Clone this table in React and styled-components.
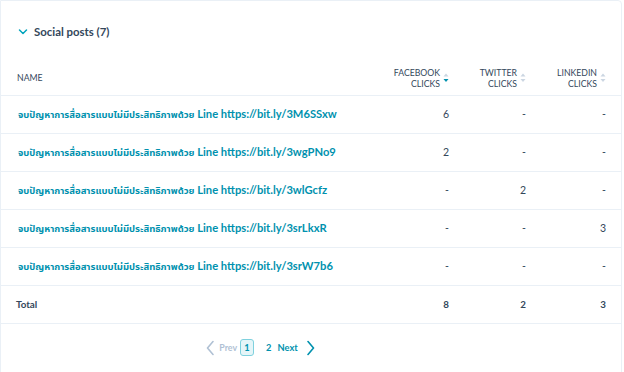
import React from "react";
import styled, { createGlobalStyle } from "styled-components";

const Global = createGlobalStyle`
  html, body { margin: 0; padding: 0; background: #fff; }
  body { font-family: Lato, "Noto Sans", "Noto Sans Thai", sans-serif; color: #33475b; }
`;

const Card = styled.div`
  width: 622px;
  height: 390px;
  border: 1px solid #eaf0f6;
  border-radius: 0 4px 0 0;
  background: #fff;
  box-sizing: border-box;
`;

const Head = styled.div`
  display: flex;
  align-items: center;
  gap: 6px;
  height: 59px;
  padding-left: 17px;
  padding-top: 2px;
  box-sizing: border-box;
`;

const Title = styled.h3`
  margin: 0;
  font-size: 11.4px;
  font-weight: 700;
  color: #33475b;
`;

const Table = styled.table`
  width: 100%;
  border-collapse: collapse;
  table-layout: fixed;
`;

const Th = styled.th`
  height: 35px;
  padding: 0 15px 6px ${(p) => (p.$first ? "16px" : "0")};
  text-align: ${(p) => (p.$first ? "left" : "right")};
  vertical-align: bottom;
  font-size: 8.7px;
  font-weight: 400;
  line-height: 11px;
  color: #33475b;
  text-transform: uppercase;
  border-bottom: 1px solid #eaf0f6;
  width: ${(p) => p.$w || "auto"};
  box-sizing: border-box;
`;

const HeadInner = styled.span`
  display: inline-flex;
  align-items: center;
  gap: 3px;
  padding-bottom: ${(p) => (p.$single ? "6px" : "0")};
`;

const Td = styled.td`
  height: 38px;
  padding: 0 15px 0 ${(p) => (p.$first ? "17px" : "0")};
  text-align: ${(p) => (p.$first ? "left" : "right")};
  font-size: 10.5px;
  font-weight: 400;
  color: #33475b;
  border-bottom: 1px solid #eaf0f6;
  white-space: nowrap;
  box-sizing: border-box;
`;

const TotalCell = styled(Td)`
  font-size: 9.8px;
  font-weight: 700;
  padding-left: ${(p) => (p.$first ? "15px" : "0")};
`;

const Link = styled.a`
  color: #0091ae;
  font-weight: 700;
  font-size: 11.2px;
  text-decoration: none;
`;

const Thai = styled.span`
  font-size: 9.5px;
`;

const Pager = styled.nav`
  display: flex;
  justify-content: center;
  align-items: center;
  height: 48px;
  padding-right: 101px;
  font-size: 9.3px;
  font-weight: 700;
`;

const PageLink = styled.span`
  color: ${(p) => (p.$disabled ? "#b0c1d4" : "#0091ae")};
  margin-right: ${(p) => p.$mr || "0"};
  font-size: ${(p) => p.$fs || "inherit"};
  display: inline-flex;
  align-items: center;
`;

const CurrentPage = styled.span`
  display: inline-flex;
  align-items: center;
  justify-content: center;
  width: 14px;
  height: 17px;
  box-sizing: border-box;
  border: 1px solid #7fd1de;
  border-radius: 3px;
  background: #e5f5f8;
  color: #0091ae;
  margin-right: 12px;
`;

const Chevron = ({ color = "#00a4bd" }) => (
  <svg width="10" height="8" viewBox="0 0 10 8">
    <path d="M1.5 2 L5 5.5 L8.5 2" fill="none" stroke={color} strokeWidth="1.5" strokeLinecap="round" strokeLinejoin="round" />
  </svg>
);

const Arrow = ({ dir, color }) => (
  <svg width="8" height="16" viewBox="0 0 8 16">
    <path
      d={dir === "left" ? "M7 1.5 L1.5 8 L7 14.5" : "M1 1.5 L6.5 8 L1 14.5"}
      fill="none"
      stroke={color}
      strokeWidth="1.6"
      strokeLinecap="round"
      strokeLinejoin="round"
    />
  </svg>
);

const Sort = ({ active }) => (
  <svg width="6" height="12" viewBox="0 0 6 12">
    <path d="M0.5 4.5 L3 1.5 L5.5 4.5 Z" fill="#cbd6e2" />
    <path d="M0.5 7 L3 10 L5.5 7 Z" fill={active ? "#0091ae" : "#cbd6e2"} />
  </svg>
);

const rows = [
  ["https://bit.ly/3M6SSxw", "6", "-", "-"],
  ["https://bit.ly/3wgPNo9", "2", "-", "-"],
  ["https://bit.ly/3wlGcfz", "-", "2", "-"],
  ["https://bit.ly/3srLkxR", "-", "-", "3"],
  ["https://bit.ly/3srW7b6", "-", "-", "-"],
];

const prefix = "จบปัญหาการสื่อสารแบบไม่มีประสิทธิภาพด้วย";

export default function App() {
  return (
    <>
      <Global />
      <Card>
        <Head>
          <Chevron />
          <Title>Social posts (7)</Title>
        </Head>
        <Table>
          <thead>
            <tr>
              <Th $first>
                <HeadInner $single>Name</HeadInner>
              </Th>
              <Th $w="110px">
                <HeadInner>
                  <span>Facebook<br />clicks</span>
                  <Sort active />
                </HeadInner>
              </Th>
              <Th $w="77px">
                <HeadInner>
                  <span>Twitter<br />clicks</span>
                  <Sort />
                </HeadInner>
              </Th>
              <Th $w="80px">
                <HeadInner>
                  <span>LinkedIn<br />clicks</span>
                  <Sort />
                </HeadInner>
              </Th>
            </tr>
          </thead>
          <tbody>
            {rows.map((r) => (
              <tr key={r[0]}>
                <Td $first>
                  <Link href="#">
                    <Thai>{prefix}</Thai> Line {r[0]}
                  </Link>
                </Td>
                <Td>{r[1]}</Td>
                <Td>{r[2]}</Td>
                <Td>{r[3]}</Td>
              </tr>
            ))}
            <tr>
              <TotalCell $first>Total</TotalCell>
              <TotalCell>8</TotalCell>
              <TotalCell>2</TotalCell>
              <TotalCell>3</TotalCell>
            </tr>
          </tbody>
        </Table>
        <Pager>
          <PageLink $disabled $mr="5px">
            <Arrow dir="left" color="#b0c1d4" />
          </PageLink>
          <PageLink $disabled $mr="3px" $fs="8.8px">Prev</PageLink>
          <CurrentPage>1</CurrentPage>
          <PageLink $mr="6px">2</PageLink>
          <PageLink $mr="9px">Next</PageLink>
          <PageLink>
            <Arrow dir="right" color="#0091ae" />
          </PageLink>
        </Pager>
      </Card>
    </>
  );
}
